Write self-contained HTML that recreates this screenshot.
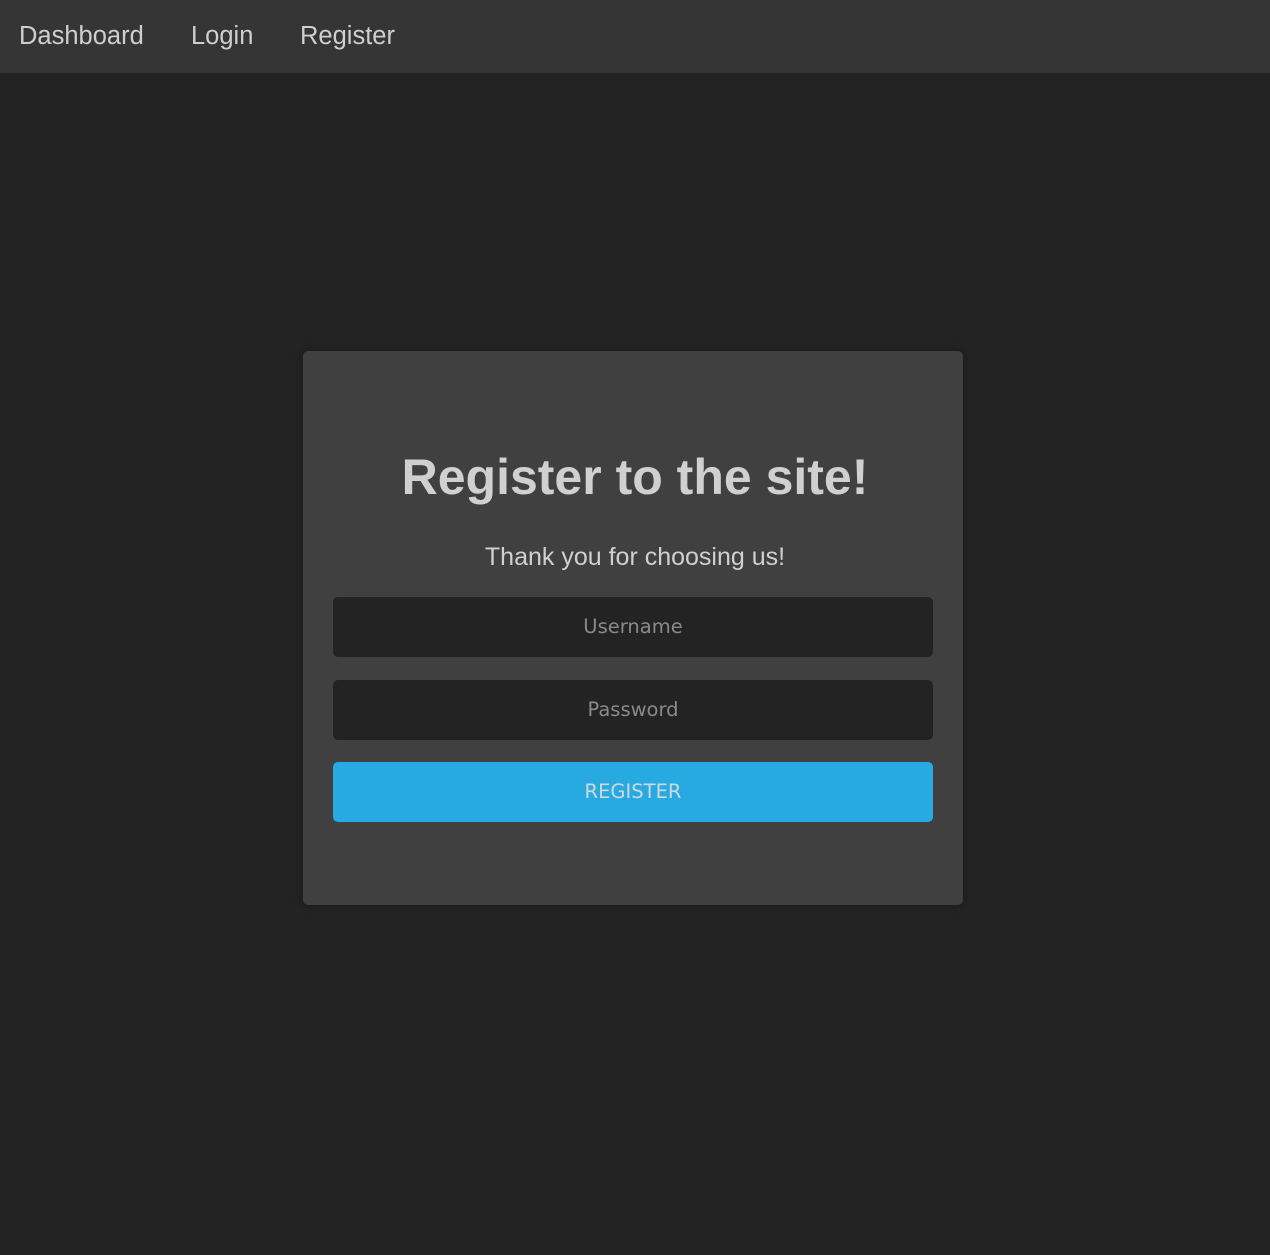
<!DOCTYPE html>
<html><head><style>
html,body{margin:0;padding:0;background:#232323;width:1270px;height:1255px;overflow:hidden;font-family:"DejaVu Sans","Liberation Sans",sans-serif;}
.nav{height:73px;background:#353535;position:relative;}
.nav a{position:absolute;top:22px;color:#cfcfcf;text-decoration:none;font-family:"Liberation Sans",sans-serif;font-size:25.5px;}
.card{position:absolute;left:303px;top:351px;width:660px;height:554px;background:#404040;border-radius:5px;box-shadow:0 0 8px rgba(0,0,0,.35);}
h1{position:absolute;left:0;right:0;top:447px;margin:0;text-align:center;font-family:"Liberation Sans",sans-serif;font-weight:bold;font-size:50px;color:#d0d0d0;line-height:60px;}
.sub{position:absolute;left:0;right:0;top:543px;text-align:center;font-family:"Liberation Sans",sans-serif;font-size:25px;color:#d0d0d0;}
.inp{position:absolute;left:333px;width:600px;height:60px;border-radius:5px;background:#232323;color:#8a8a8a;font-size:19.5px;line-height:60px;text-align:center;}
.btn{position:absolute;left:333px;top:762px;width:600px;height:60px;border-radius:5px;background:#27aae1;color:#d0d8dc;font-size:19.5px;line-height:60px;text-align:center;}
</style></head><body>
<div class="nav"><a style="left:19px">Dashboard</a><a style="left:191px">Login</a><a style="left:300px">Register</a></div>
<div class="card"></div>
<h1>Register to the site!</h1>
<div class="sub">Thank you for choosing us!</div>
<div class="inp" style="top:597px">Username</div>
<div class="inp" style="top:680px">Password</div>
<div class="btn">REGISTER</div>
</body></html>
